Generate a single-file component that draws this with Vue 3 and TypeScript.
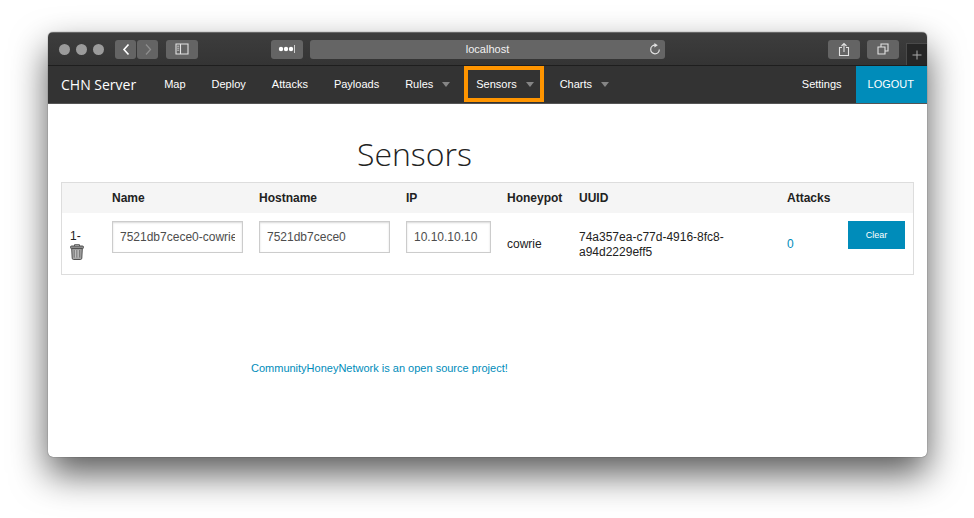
<script setup lang="ts">
import { ref } from 'vue'

interface NavItem {
  label: string
  menu?: boolean
  highlighted?: boolean
}

interface Sensor {
  name: string
  hostname: string
  ip: string
  honeypot: string
  uuid: string
  attacks: number
}

const navItems: NavItem[] = [
  { label: 'Map' },
  { label: 'Deploy' },
  { label: 'Attacks' },
  { label: 'Payloads' },
  { label: 'Rules', menu: true },
  { label: 'Sensors', menu: true, highlighted: true },
  { label: 'Charts', menu: true },
]

const sensors = ref<Sensor[]>([
  {
    name: '7521db7cece0-cowrie',
    hostname: '7521db7cece0',
    ip: '10.10.10.10',
    honeypot: 'cowrie',
    uuid: '74a357ea-c77d-4916-8fc8-a94d2229eff5',
    attacks: 0,
  },
])
</script>

<template>
  <div class="window">
    <header class="toolbar">
      <div class="tools left">
        <div class="lights"><i></i><i></i><i></i></div>
        <div class="pair">
          <button class="tool narrow" type="button" aria-label="Back">
            <svg width="20" height="19" viewBox="0 0 20 19"><path d="M12.500 4.500 8 9.500l4.500 5" fill="none" stroke="#fff" stroke-width="1.600" /></svg>
          </button>
          <button class="tool narrow" type="button" aria-label="Forward">
            <svg width="20" height="19" viewBox="0 0 20 19"><path d="M8 4.500l4.500 5-4.500 5" fill="none" stroke="#8d8d8d" stroke-width="1.300" /></svg>
          </button>
        </div>
        <button class="tool" type="button" aria-label="Sidebar">
          <svg width="14" height="12" viewBox="0 0 14 12" fill="none" stroke="#e2e2e2">
            <path d="M1 1h12v10H1zM5.500 1v10" stroke-width="1.100" />
            <path d="M2.200 3.200h2M2.200 5.200h2M2.200 7.200h2" stroke-width=".8" />
          </svg>
        </button>
        <button class="tool extension" type="button" aria-label="Password manager">
          <svg width="18" height="10" viewBox="0 0 18 10">
            <g fill="#fff"><circle cx="3" cy="5" r="2.200" /><circle cx="8" cy="5" r="2.200" /><circle cx="13" cy="5" r="2.200" /></g>
            <path d="M16.500 1v8" stroke="#d0d0d0" />
          </svg>
        </button>
      </div>
      <div class="address">
        <span>localhost</span>
        <button class="reload" type="button" aria-label="Reload">
          <svg width="12" height="12" viewBox="0 0 12 12">
            <path d="M6 2.200a4.300 4.300 0 1 0 4.300 4.300" fill="none" stroke="#e2e2e2" stroke-width="1.200" />
            <path d="M5.400 0v4.400L8.800 2.200z" fill="#e2e2e2" />
          </svg>
        </button>
      </div>
      <div class="tools right">
        <button class="tool" type="button" aria-label="Share">
          <svg width="12" height="15" viewBox="0 0 12 15" fill="none" stroke="#e2e2e2" stroke-width="1.100">
            <path d="M4 5.500H1.500v8h9v-8H8M6 10V1.500M3.500 4 6 1.500 8.500 4" />
          </svg>
        </button>
        <button class="tool" type="button" aria-label="Show tabs">
          <svg width="12" height="12" viewBox="0 0 12 12" fill="none" stroke="#e2e2e2" stroke-width="1.100">
            <path d="M1 4h7v7H1zM4 4V1h7v7H8" />
          </svg>
        </button>
        <button class="new-tab" type="button" aria-label="New tab">
          <svg width="10" height="10" viewBox="0 0 10 10"><path d="M5 .5v9M.5 5h9" stroke="#aaa" stroke-width="1" /></svg>
        </button>
      </div>
    </header>

    <nav class="nav">
      <a class="brand" href="#">CHN Server</a>
      <a
        v-for="item in navItems"
        :key="item.label"
        class="item"
        :class="{ menu: item.menu, highlighted: item.highlighted }"
        href="#"
      >{{ item.label }}</a>
      <a class="item settings" href="#">Settings</a>
      <a class="logout" href="#">LOGOUT</a>
    </nav>

    <main class="content">
      <h1>Sensors</h1>
      <table>
        <colgroup>
          <col class="c-index" />
          <col class="c-name" />
          <col class="c-name" />
          <col class="c-ip" />
          <col class="c-honeypot" />
          <col />
          <col class="c-attacks" />
          <col class="c-clear" />
        </colgroup>
        <thead>
          <tr>
            <th></th>
            <th>Name</th>
            <th>Hostname</th>
            <th>IP</th>
            <th>Honeypot</th>
            <th>UUID</th>
            <th>Attacks</th>
            <th></th>
          </tr>
        </thead>
        <tbody>
          <tr v-for="(sensor, index) in sensors" :key="sensor.uuid">
            <td class="index">
              <div>{{ index + 1 }}-</div>
              <button class="trash" type="button" aria-label="Delete sensor">
                <svg width="14" height="16" viewBox="0 0 14 16">
                  <path d="M4.500 2V.7h5V2" fill="none" stroke="#555" />
                  <path d="M1.700 4.500h10.600l-.5 9.700q-.1 1.300-1.400 1.300H3.600q-1.300 0-1.400-1.300z" fill="#a6a6a6" stroke="#505050" />
                  <rect x=".5" y="2" width="13" height="2.600" rx="1.100" fill="#8c8c8c" stroke="#505050" />
                  <path d="M4.300 6v7.500M7 6v7.500M9.700 6v7.500" stroke="#707070" />
                  <path d="M5.300 6v7.500M8 6v7.500" stroke="#d0d0d0" stroke-width=".7" />
                </svg>
              </button>
            </td>
            <td class="top"><input v-model="sensor.name" type="text" aria-label="Name" /></td>
            <td class="top"><input v-model="sensor.hostname" type="text" aria-label="Hostname" /></td>
            <td class="top"><input v-model="sensor.ip" type="text" aria-label="IP" /></td>
            <td>{{ sensor.honeypot }}</td>
            <td class="uuid">{{ sensor.uuid }}</td>
            <td><a href="#">{{ sensor.attacks }}</a></td>
            <td class="top"><button class="clear" type="button">Clear</button></td>
          </tr>
        </tbody>
      </table>
      <footer><a href="#">CommunityHoneyNetwork is an open source project!</a></footer>
    </main>
  </div>
</template>

<style>
body {
  background: #fff;
}
</style>

<style scoped>
* {
  box-sizing: border-box;
}
.window {
  display: flex;
  flex-direction: column;
  min-height: calc(100vh - 93px);
  margin: 32px 47px 61px 48px;
  border-radius: 5px;
  overflow: hidden;
  background: #fff;
  font-family: "Liberation Sans", Arial, sans-serif;
  font-size: 12px;
  line-height: 15px;
  color: #222;
  box-shadow: 0 0 1px rgba(0, 0, 0, 0.8), 0 17px 36px rgba(0, 0, 0, 0.65);
}
button {
  padding: 0;
  border: 0;
  background: none;
  font-family: inherit;
}
svg {
  display: block;
}
a {
  color: #008cba;
  text-decoration: none;
}

.toolbar {
  display: grid;
  grid-template-columns: minmax(0, 1fr) 40.3% minmax(0, 1fr);
  align-items: center;
  height: 34px;
  background: linear-gradient(#3d3d3d, #343434);
  border-top: 1px solid #666;
  border-bottom: 1px solid #1e1e1e;
}
.tools {
  display: flex;
  align-items: center;
  align-self: stretch;
}
.left {
  gap: 8px;
  padding: 0 7px 0 11px;
}
.right {
  justify-content: flex-end;
  gap: 7px;
}
.lights {
  display: flex;
  gap: 6px;
  margin-right: 3px;
}
.lights i {
  width: 11px;
  height: 11px;
  border-radius: 50%;
  background: #9b9b9b;
}
.pair {
  display: flex;
  gap: 1px;
}
.tool {
  display: flex;
  align-items: center;
  justify-content: center;
  width: 32px;
  height: 19px;
  border-radius: 3px;
  background: #646464;
}
.narrow {
  width: 21px;
}
.extension {
  margin-left: auto;
}
.address {
  position: relative;
  display: flex;
  align-items: center;
  justify-content: center;
  height: 19px;
  border-radius: 3px;
  background: #656565;
  color: #f2f2f2;
  font-size: 11px;
}
.reload {
  position: absolute;
  right: 4px;
  top: 3px;
}
.new-tab {
  display: flex;
  align-items: center;
  justify-content: center;
  align-self: flex-end;
  width: 21px;
  height: 22px;
  border-top: 1px solid #4a4a4a;
  border-left: 1px solid #4a4a4a;
  background: #262626;
}

.nav {
  display: flex;
  align-items: center;
  height: 38px;
  padding-left: 13px;
  background: #333;
  border-bottom: 1px solid #555;
  font-size: 11px;
}
.nav a {
  color: #fff;
}
.nav .brand {
  margin-right: 16px;
  font-family: "Open Sans", sans-serif;
  font-size: 14px;
}
.item {
  position: relative;
  padding: 0 14px 0 12px;
}
.menu {
  display: flex;
  align-items: center;
  gap: 9px;
}
.menu::after {
  content: "";
  border: 4px solid transparent;
  border-top: 5px solid #858585;
  border-bottom: 0;
}
.highlighted::before {
  content: "";
  position: absolute;
  inset: -11px 4px -10px 0;
  border: 4px solid #ff9500;
}
.settings {
  margin-left: auto;
}
.logout {
  align-self: stretch;
  display: flex;
  align-items: center;
  padding: 0 13px 0 12px;
  background: #008cba;
}

.content {
  padding: 31px 13px 0;
}
h1 {
  width: 83.333%;
  margin: 0 0 9px;
  padding-right: 4px;
  text-align: center;
  font: 300 32px/38px "Open Sans", sans-serif;
  color: #222;
}
table {
  width: 100%;
  table-layout: fixed;
  border-spacing: 0;
  border: 1px solid #ddd;
}
.c-index {
  width: 42px;
}
.c-name {
  width: 147px;
}
.c-ip {
  width: 101px;
}
.c-honeypot {
  width: 72px;
}
.c-attacks {
  width: 61px;
}
.c-clear {
  width: 73px;
}
th {
  height: 30px;
  padding: 0 8px;
  background: #f5f5f5;
  text-align: left;
}
td {
  height: 61px;
  padding: 10px 8px 8px;
}
.index {
  padding-top: 14px;
}
.top {
  padding-top: 8px;
  vertical-align: top;
}
.uuid {
  padding-right: 48px;
}
input {
  display: block;
  width: 100%;
  height: 32px;
  padding: 0 7px;
  border: 1px solid #ccc;
  box-shadow: inset 0 1px 2px rgba(0, 0, 0, 0.15);
  background: #fff;
  font: 12px "Liberation Sans", Arial, sans-serif;
  color: #4d4d4d;
}
.clear {
  display: block;
  width: 100%;
  height: 28px;
  background: #008cba;
  color: #fff;
  font-size: 9px;
}
footer {
  margin: 86px 0 0 190px;
  font-size: 11px;
}
</style>
